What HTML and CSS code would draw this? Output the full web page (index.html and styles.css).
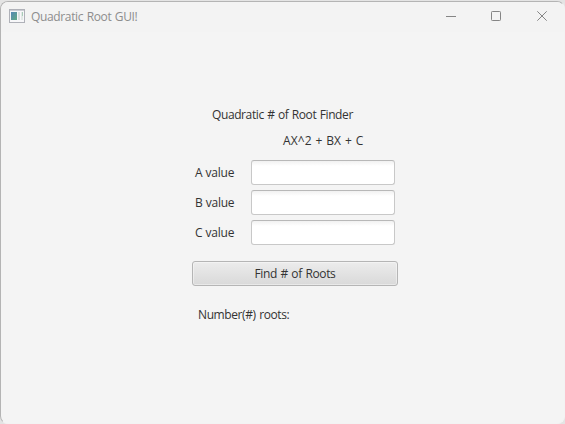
FILE: index.html
```html
<!DOCTYPE html>
<html lang="en">
<head>
<meta charset="utf-8">
<title>Quadratic Root GUI!</title>
<link rel="stylesheet" href="styles.css">
</head>
<body>
<main class="window">
  <header class="titlebar">
    <svg class="app-icon" width="16" height="14" viewBox="0 0 16 14">
      <defs><linearGradient id="screen" x2="1" y2="1"><stop stop-color="#5688b5"/><stop offset="1" stop-color="#63aa84"/></linearGradient></defs>
      <rect x=".5" y=".5" width="15" height="13" fill="#f7f7f9" stroke="#afb1b8"/>
      <path d="M1 1.5h14" stroke="#cccdd4"/>
      <path d="M2 3h6v8H2z" fill="url(#screen)"/>
      <path d="M9 3h2v8H9z" fill="#dce0e0"/>
      <path d="M12 3h2v8h-2z" fill="#e2e8e5"/>
      <path d="M13 3h1v4h-1z" fill="#a8cbb8"/>
    </svg>
    <h1 class="title"><span class="title-text">Quadratic Root GUI!</span></h1>
    <div class="controls">
      <svg width="10" height="10" viewBox="0 0 10 10"><path d="M0 5.5h10"/></svg>
      <svg width="10" height="10" viewBox="0 0 10 10"><rect x=".5" y=".5" width="9" height="9" rx=".8"/></svg>
      <svg class="close" width="10" height="10" viewBox="0 0 10 10"><path d="M.3.3l9.4 9.4M9.7.3L.3 9.7"/></svg>
    </div>
  </header>
  <section class="content">
    <h2 class="heading"><span class="heading-text">Quadratic # of Root Finder</span></h2>
    <p class="formula"><span class="formula-text">AX^2 + BX + C</span></p>
    <div class="fields">
      <label for="a">A value</label><input id="a" type="text">
      <label for="b">B value</label><input id="b" type="text">
      <label for="c">C value</label><input id="c" type="text">
    </div>
    <button class="find" type="button"><span class="find-text">Find # of Roots</span></button>
    <p class="result"><span class="result-text">Number(#) roots:</span></p>
  </section>
</main>
</body>
</html>
```
FILE: styles.css
```css
* { box-sizing: border-box; }
body {
  margin: 0;
  height: 424px;
  padding-top: 1px;
  overflow: hidden;
  background: #e4e4e4;
  font: 12px/16px "Open Sans", "Noto Sans", sans-serif;
  color: #333;
}
h1, h2, p { margin: 0; font-size: 12px; font-weight: 400; white-space: nowrap; }
.window {
  height: 423px;
  border: 1px solid #b4b4b4;
  border-right-color: #f3f3f3;
  border-bottom-color: #f3f3f3;
  border-radius: 8px;
  background: #f4f4f4;
}
.titlebar {
  display: flex;
  align-items: flex-start;
  height: 30px;
  padding: 7px 17px 0 8px;
  border-radius: 7px 7px 0 0;
  background: #f3f3f3;
}
.title { margin-left: 6px; color: #8d8d8d; }
.title-text { letter-spacing: -0.35px; word-spacing: 0.7px; }
.controls { display: flex; gap: 35px; margin: 2px 0 0 auto; }
.controls svg { fill: none; stroke: #858585; stroke-width: 1; }
.controls .close { margin-left: 1px; }
.content {
  display: flex;
  flex-direction: column;
  width: 206px;
  margin: 75px 0 0 191px;
}
.heading { padding-left: 20px; }
.heading-text { letter-spacing: -0.4px; word-spacing: 0.7px; }
.formula { margin-top: 10px; padding-left: 91px; }
.formula-text { letter-spacing: 0.1px; word-spacing: 0.6px; }
.fields {
  display: grid;
  grid-template-columns: 56px 144px;
  gap: 5px 0;
  align-items: center;
  margin: 11px 0 0 3px;
}
label { letter-spacing: -0.25px; word-spacing: 0.4px; }
input {
  width: 144px;
  height: 25px;
  padding: 4px 7px;
  border: 1px solid #c8c8c8;
  border-top-color: #b8b8b8;
  border-radius: 3px;
  outline: none;
  background: linear-gradient(#f1f1f1, #fff 5px);
  font: inherit;
}
.find {
  width: 206px;
  height: 25px;
  margin-top: 16px;
  padding: 0;
  border: 1px solid #b5b5b5;
  border-radius: 3px;
  background: linear-gradient(#ececec, #d9d9d9);
  box-shadow: inset 0 0 0 1px rgba(255, 255, 255, .4);
  color: #333;
  font: inherit;
}
.find-text { letter-spacing: -0.35px; word-spacing: 0.7px; }
.result { margin-top: 21px; padding-left: 6px; }
.result-text { letter-spacing: -0.4px; word-spacing: 0.7px; }
```
